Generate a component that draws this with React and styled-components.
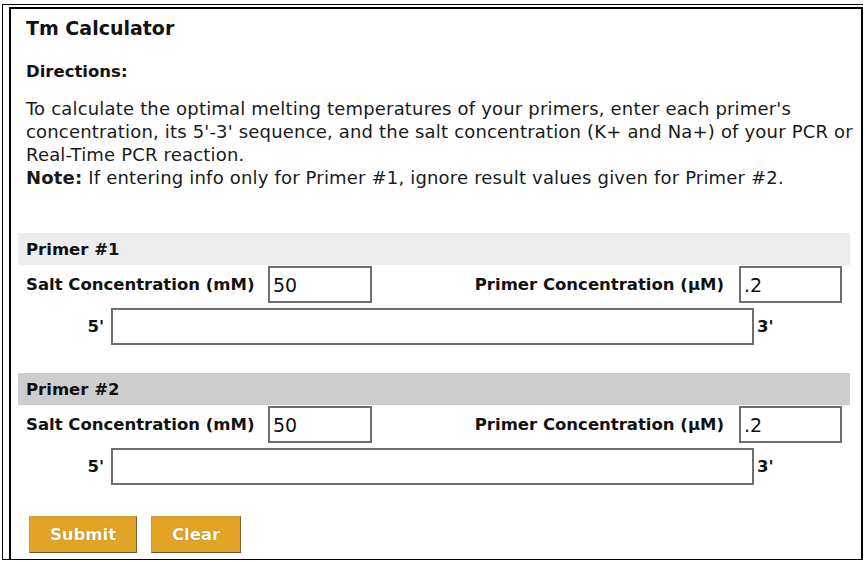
import React from 'react';
import styled, { createGlobalStyle } from 'styled-components';

const GlobalStyle = createGlobalStyle`
  html, body {
    margin: 0;
    padding: 0;
    background: #fff;
  }
  body {
    font-family: "DejaVu Sans", Verdana, sans-serif;
    color: #111;
  }
`;

const OuterFrame = styled.div`
  box-sizing: border-box;
  margin: 4px 0 0 2px;
  width: 861px;
  height: 556px;
  border-top: 1px solid #000;
  border-left: 1px solid #000;
  border-bottom: 1px solid #000;
  display: flex;
  flex-direction: column;
`;

const InnerFrame = styled.div`
  flex: 1;
  margin: 2px 0 0 6px;
  border-top: 2px solid #000;
  border-left: 2px solid #000;
  border-right: 2px solid #000;
  padding: 0 11px 0 7px;
  display: flex;
  flex-direction: column;
`;

const Title = styled.h1`
  margin: 8px 0 0;
  padding-left: 8px;
  font-size: 19px;
  line-height: 23px;
  font-weight: bold;
`;

const Directions = styled.h2`
  margin: 21px 0 0;
  padding-left: 8px;
  font-size: 16.5px;
  line-height: 21px;
  font-weight: bold;
`;

const Para = styled.p`
  margin: 15px 0 0;
  padding-left: 8px;
  font-size: 18px;
  line-height: 23px;
  letter-spacing: 0.18px;
  white-space: nowrap;
  color: #1a1a1a;

  b {
    font-weight: bold;
  }
`;

const Section = styled.section`
  margin-top: ${(p) => p.$top}px;
  display: flex;
  flex-direction: column;
`;

const Band = styled.div`
  height: 32px;
  background: ${(p) => (p.$dark ? '#cdcdcd' : '#ededed')};
  padding-left: 8px;
  display: flex;
  align-items: center;
  font-size: 16.5px;
  font-weight: bold;
`;

const ConcRow = styled.div`
  margin-top: 1px;
  padding: 0 8px;
  display: grid;
  grid-template-columns: 242px 104px 1fr 103px;
  align-items: center;
`;

const Label = styled.label`
  font-size: 16.5px;
  font-weight: bold;
  text-align: ${(p) => (p.$right ? 'right' : 'left')};
  padding-right: ${(p) => (p.$right ? '15px' : '0')};
  white-space: nowrap;
`;

const SeqRow = styled.div`
  margin-top: 5px;
  padding-left: 8px;
  display: grid;
  grid-template-columns: 85px 643px auto;
  align-items: center;
`;

const EndLabel = styled.span`
  font-size: 16.5px;
  font-weight: bold;
  text-align: ${(p) => (p.$right ? 'right' : 'left')};
  padding: ${(p) => (p.$right ? '0 7px 0 0' : '0 0 0 3px')};
`;

const TextBox = styled.input`
  box-sizing: border-box;
  width: 100%;
  height: 37px;
  margin: 0;
  border: 2px solid #6e6e6e;
  border-radius: 0;
  padding: 0 3px;
  font-family: "DejaVu Sans", Verdana, sans-serif;
  font-size: 19px;
  color: #111;
  background: #fff;
  outline: none;
`;

const ButtonBar = styled.div`
  margin-top: 31px;
  padding-left: 11px;
  display: flex;
  gap: 14px;
`;

const GoldButton = styled.button`
  box-sizing: border-box;
  width: ${(p) => p.$w}px;
  height: 37px;
  margin: 0;
  background: #e2a424;
  border: 1px solid;
  border-color: #d1a040 #7a6332 #6b5a35 #c79a3c;
  border-radius: 0;
  color: #fff;
  font-family: "DejaVu Sans", Verdana, sans-serif;
  font-size: 16.5px;
  font-weight: bold;
  text-shadow: 0 0 1px rgba(90, 60, 0, 0.7);
  cursor: pointer;
`;

function PrimerBlock({ num, dark, top }) {
  return (
    <Section $top={top}>
      <Band $dark={dark}>Primer #{num}</Band>
      <ConcRow>
        <Label>Salt Concentration (mM)</Label>
        <TextBox defaultValue="50" />
        <Label $right>Primer Concentration (µM)</Label>
        <TextBox defaultValue=".2" />
      </ConcRow>
      <SeqRow>
        <EndLabel $right>5'</EndLabel>
        <TextBox />
        <EndLabel>3'</EndLabel>
      </SeqRow>
    </Section>
  );
}

export default function App() {
  return (
    <>
      <GlobalStyle />
      <OuterFrame>
        <InnerFrame>
          <Title>Tm Calculator</Title>
          <Directions>Directions:</Directions>
          <Para>
            To calculate the optimal melting temperatures of your primers, enter each primer's
            <br />
            concentration, its 5'-3' sequence, and the salt concentration (K+ and Na+) of your PCR or
            <br />
            Real-Time PCR reaction.
            <br />
            <b>Note:</b> If entering info only for Primer #1, ignore result values given for Primer #2.
          </Para>
          <PrimerBlock num={1} top={44} />
          <PrimerBlock num={2} dark top={28} />
          <ButtonBar>
            <GoldButton $w={108}>Submit</GoldButton>
            <GoldButton $w={90}>Clear</GoldButton>
          </ButtonBar>
        </InnerFrame>
      </OuterFrame>
    </>
  );
}
